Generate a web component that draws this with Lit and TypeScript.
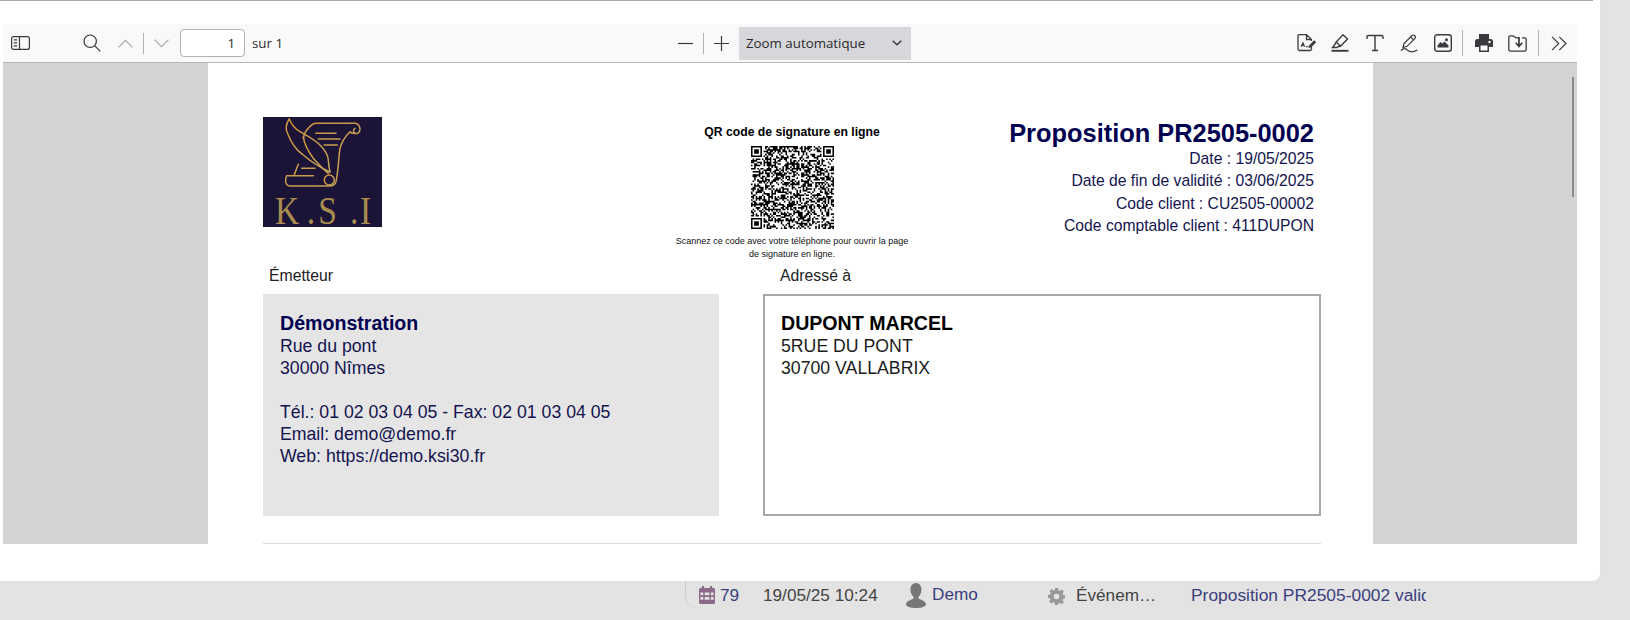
import { LitElement, html, css } from "lit";
import { customElement } from "lit/decorators.js";

function buildQr(): string {
  const n = 53;
  let s = 20250519;
  const rnd = () => {
    s = (s * 1664525 + 1013904223) >>> 0;
    return (s >>> 16) / 65536;
  };
  const finder = (x: number, y: number, ox: number, oy: number) => {
    const dx = x - ox, dy = y - oy;
    if (dx < -1 || dy < -1 || dx > 7 || dy > 7) return -1;
    if (dx < 0 || dy < 0 || dx > 6 || dy > 6) return 0;
    if (dx === 0 || dy === 0 || dx === 6 || dy === 6) return 1;
    if (dx >= 2 && dx <= 4 && dy >= 2 && dy <= 4) return 1;
    return 0;
  };
  let d = "";
  for (let y = 0; y < n; y++) {
    for (let x = 0; x < n; x++) {
      let v = -1;
      for (const [ox, oy] of [[0, 0], [n - 7, 0], [0, n - 7]]) {
        const f = finder(x, y, ox, oy);
        if (f >= 0) v = f;
      }
      const on = v >= 0 ? v === 1 : rnd() > 0.5;
      if (on) d += `M${x} ${y}h1v1h-1z`;
    }
  }
  return d;
}
const QR_PATH = buildQr();

@customElement("app-root")
export class AppRoot extends LitElement {
  static styles = css`
    :host { display: block; width: 1630px; height: 620px; overflow: hidden; background: #e3e3e3; font-family: "Liberation Sans", Arial, sans-serif; }
    .dialog { width: 1600px; height: 581px; background: #fff; border-bottom-right-radius: 8px; display: flex; flex-direction: column; box-sizing: border-box; padding-left: 3px; box-shadow: 0 0 1px #ddd; }
    .topline { width: 1593px; height: 1px; background: #a6a6a6; margin: 0 0 23px -3px; flex: none; }
    .viewer { width: 1574px; height: 520px; display: flex; flex-direction: column; position: relative; overflow: hidden; flex: none; }
    .toolbar { height: 39px; box-sizing: border-box; background: #f9f9fa; border-bottom: 1px solid #b8b8b8; display: flex; align-items: center; font-family: "Open Sans", "Noto Sans", sans-serif; font-size: 13.3px; color: #2b2b2b; flex: none; }
    .toolbar svg { display: block; flex: none; fill: none; stroke: #3a3a3f; stroke-width: 1.2; }
    .sep { width: 1px; height: 21px; background: #b4b4b8; flex: none; }
    .pageinput { width: 65px; height: 28px; box-sizing: border-box; border: 1px solid #b1b1b7; border-radius: 4px; background: #fff; text-align: right; padding-right: 9px; line-height: 27px; flex: none; }
    .zoomsel { width: 172px; height: 33px; background: #d7d7db; display: flex; align-items: center; justify-content: space-between; padding: 0 9px 0 7px; box-sizing: border-box; flex: none; }
    .canvas { flex: 1; background: #d3d3d6; display: flex; padding-left: 205px; overflow: hidden; }
    .page { width: 1165px; height: 600px; background: #fff; box-sizing: border-box; padding: 54px 52px 0 55px; flex: none; color: #000050; }
    .head { display: flex; align-items: flex-start; height: 150px; }
    .logo { width: 119px; height: 110px; display: block; flex: none; background: #1c1437; }
    .qr { width: 240px; margin-left: 290px; flex: none; text-align: center; color: #000; }
    .qr-title { font-size: 12.2px; font-weight: 700; line-height: 14px; margin-top: 8px; }
    .qr-img { display: block; width: 83px; height: 83px; margin: 7px auto 6px; }
    .qr-note { font-size: 9px; line-height: 13px; color: #111; }
    .info { flex: 1; text-align: right; padding-right: 7px; font-size: 15.7px; line-height: 22.4px; color: #14144e; }
    .title { font-size: 25.4px; font-weight: 700; line-height: 28px; color: #000050; margin-top: 2px; margin-bottom: 1px; }
    .parties { display: grid; grid-template-columns: 456px 558px; column-gap: 44px; }
    .label { font-size: 15.8px; line-height: 18px; color: #222; margin-left: 6px; }
    .addr .label { margin-left: 17px; }
    .box { height: 222px; box-sizing: border-box; margin-top: 9px; padding: 18px 17px; font-size: 17.7px; line-height: 22px; }
    .sender { background: #e5e5e6; color: #14144e; }
    .sender b { color: #000050; font-size: 19.6px; }
    .recipient { border: 2px solid #a8a8a8; color: #1c1c1c; padding: 16px 16px; }
    .recipient b { color: #000; font-size: 19.6px; }
    .blank { height: 22px; }
    .rule { height: 1px; background: #dcdcdc; margin-top: 27px; }
    .scrollthumb { position: absolute; left: 1569px; top: 53px; width: 2px; height: 120px; background: #8b8b8e; }
    .status { flex: 1; display: flex; }
    .spacer { width: 685px; flex: none; }
    .bar { flex: 1; border-left: 1.5px solid #cbcbcb; border-bottom-left-radius: 12px; margin-bottom: -1px; display: flex; align-items: flex-start; font-size: 17.2px; line-height: 18px; color: #444; padding-top: 4px; box-sizing: border-box; }
    .bar svg { display: block; flex: none; }
    .link { color: #3a3f7c; }
    .cell { flex: none; white-space: nowrap; overflow: hidden; }
    .subject { font-size: 17.4px; }
  `;

  render() {
    return html`
      <div class="dialog">
        <div class="topline"></div>
        <div class="viewer">
          ${this.toolbar()}
          <div class="canvas">
            <div class="page">
              <div class="head">
                ${this.logo()}
                <div class="qr">
                  <div class="qr-title">QR code de signature en ligne</div>
                  <svg class="qr-img" viewBox="0 0 53 53" aria-hidden="true"><path d=${QR_PATH} fill="#000"></path></svg>
                  <div class="qr-note">Scannez ce code avec votre téléphone pour ouvrir la page<br />de signature en ligne.</div>
                </div>
                <div class="info">
                  <div class="title">Proposition PR2505-0002</div>
                  <div>Date : 19/05/2025</div>
                  <div>Date de fin de validité : 03/06/2025</div>
                  <div>Code client : CU2505-00002</div>
                  <div>Code comptable client : 411DUPON</div>
                </div>
              </div>
              <div class="parties">
                <div>
                  <div class="label">Émetteur</div>
                  <div class="box sender">
                    <b>Démonstration</b><br />Rue du pont<br />30000 Nîmes
                    <div class="blank"></div>
                    Tél.: 01 02 03 04 05 - Fax: 02 01 03 04 05<br />Email: demo@demo.fr<br />Web: https://demo.ksi30.fr
                  </div>
                </div>
                <div class="addr">
                  <div class="label">Adressé à</div>
                  <div class="box recipient">
                    <b>DUPONT MARCEL</b><br />5RUE DU PONT<br />30700 VALLABRIX
                  </div>
                </div>
              </div>
              <div class="rule"></div>
            </div>
          </div>
          <div class="scrollthumb"></div>
        </div>
      </div>
      <div class="status">
        <div class="spacer"></div>
        <div class="bar">
          <svg style="margin:1px 0 0 13px" width="16" height="18" viewBox="0 0 17 18" preserveAspectRatio="none"><path fill="#8b6a88" fill-rule="evenodd" d="M3 0h2.400v2h6.200V0H14v2h1.500A1.500 1.500 0 0 1 17 3.500V16.500a1.500 1.500 0 0 1-1.500 1.500h-14A1.500 1.500 0 0 1 0 16.500V3.500A1.500 1.500 0 0 1 1.500 2H3zM1.500 6.500v2.800h3v-2.800zM6 6.500v2.800h5v-2.800zM12.500 6.500v2.800h3v-2.800zM1.500 11v2.800h3V11zM6 11v2.800h5V11zM12.500 11v2.800h3V11z"/></svg>
          <span class="cell link" style="width:43px;margin-left:5px;margin-top:1px">79</span>
          <span class="cell" style="width:143px;margin-top:1px">19/05/25 10:24</span>
          <svg width="20" height="25" style="margin-top:-2px" viewBox="0 0 20 25"><path fill="#777" d="M10 0c3.600 0 5.500 3 5.500 6.500 0 3-1.300 5.800-2.800 7.300-.6.700-.3 1.700.6 2.100 2.700 1 6.700 2.600 6.700 5.100 0 2.600-4.500 4-10 4S0 23.600 0 21c0-2.500 4-4.100 6.700-5.100.9-.4 1.200-1.400.6-2.100C5.800 12.300 4.500 9.500 4.500 6.500 4.500 3 6.400 0 10 0z"/></svg>
          <span class="cell link" style="width:116px;margin-left:6px">Demo</span>
          <svg width="17" height="17" style="margin-top:3px" viewBox="0 0 17 17"><path fill="#999" fill-rule="evenodd" d="M7 0h3l.4 2.200 1.500.6 1.900-1.300 2.100 2.100-1.300 1.900.6 1.500 2.200.4v3l-2.200.4-.6 1.500 1.300 1.900-2.100 2.100-1.900-1.300-1.500.6L10 17H7l-.4-2.200-1.500-.6-1.900 1.300-2.100-2.100 1.300-1.900-.6-1.500L0 10V7l2.200-.4.600-1.500-1.300-1.900 2.100-2.100 1.900 1.300 1.500-.6zM8.500 5.700a2.800 2.800 0 1 0 0 5.600 2.800 2.800 0 0 0 0-5.600z"/></svg>
          <span class="cell" style="width:115px;margin-left:11px;margin-top:1px">Événem…</span>
          <span class="cell link subject" style="width:235px;margin-top:1px">Proposition PR2505-0002 validée</span>
        </div>
      </div>
    `;
  }

  private logo() {
    return html`<svg class="logo" viewBox="0 0 119 110" aria-label="K.S.I">
      <defs><linearGradient id="g" x1="0" y1="0" x2="1" y2="1"><stop offset="0" stop-color="#d0923e"></stop><stop offset="1" stop-color="#c4a55c"></stop></linearGradient></defs>
      <g fill="none" stroke="url(#g)" stroke-width="1.500" stroke-linecap="round" stroke-linejoin="round">
        <path d="M26.300 2C22 8 23 14 25.300 18c3 8 8 15 15 20 8 7 18 13 26.700 17"></path>
        <path d="M26.300 2c2 5 6 10 10.700 12.700 7 4 15 8 20 13.300 5 5 8 10 8.300 15 .3 4 .7 8 1.700 12"></path>
        <path d="M40.300 19.700c1 8 5 15 10 21.600 5 6 10 11 15 15"></path>
        <path d="M40.300 21.300c1-5 2.500-8 5-10 2.500-3.300 5-5 8.400-5H92c3 0 5 3 5 6 0 3-3 5-5 4-2-.5-2-4 0-5"></path>
        <path d="M92 16.500c-2 0-4 0-5-1.800-5 5-8.500 10-10 16.600-1.500 9-1.500 22-4 33.400-1 3-3 4.300-6 4.300H27c-3 0-5-3-4.300-6 .2-2 .5-4.300 1-4.300h26.600"></path>
        <circle cx="66.300" cy="63" r="5"></circle>
        <path d="M52.700 16.300H73M55.300 22H77M61 28h13.300M35.300 47.300 31 58.500M38.700 51.300H52"></path>
      </g>
      <text transform="translate(0 107) scale(.86 1)" x="14 50.800 64.300 101.200 112.800" y="0" font-family="Liberation Serif, serif" font-size="39" fill="#a98d4f">K.S.I</text>
    </svg>`;
  }

  private toolbar() {
    return html`<div class="toolbar">
      <svg style="margin-left:8px" width="19" height="14" viewBox="0 0 19 14"><rect x=".6" y=".6" width="17.800" height="12.800" rx="2"></rect><path d="M8.500 .6v12.800M2.800 3.800h3.200M2.800 6.800h3.200M2.800 9.800h3.200"></path></svg>
      <svg style="margin-left:53px" width="18" height="18" viewBox="0 0 18 18"><circle cx="7.200" cy="7.200" r="6.200"></circle><path d="m11.800 11.800 5.500 5.500"></path></svg>
      <svg style="margin-left:17px" width="15" height="9" viewBox="0 0 15 9"><path d="m.5 8.300 7-7 7 7" style="stroke:#a8a8ac"></path></svg>
      <div class="sep" style="margin-left:10px"></div>
      <svg style="margin-left:10px" width="15" height="9" viewBox="0 0 15 9"><path d="m.5.700 7 7 7-7" style="stroke:#a8a8ac"></path></svg>
      <div class="pageinput" style="margin-left:11px">1</div>
      <span style="margin-left:7px;width:426px;flex:none">sur 1</span>
      <svg width="15" height="3" viewBox="0 0 15 3"><path d="M0 1.500h15"></path></svg>
      <div class="sep" style="margin-left:10px"></div>
      <svg style="margin-left:10px" width="15" height="15" viewBox="0 0 15 15"><path d="M0 7.500h15M7.500 0v15"></path></svg>
      <div class="zoomsel" style="margin-left:10px"><span>Zoom automatique</span><svg width="10" height="6" viewBox="0 0 10 6"><path d="m.7.700 4.300 4 4.300-4" style="stroke-width:1.500"></path></svg></div>
      <svg style="margin-left:386px" width="20" height="18" viewBox="0 0 20 18"><path d="M6 16.500H2.500a1.500 1.500 0 0 1-1.500-1.500V2A1.500 1.500 0 0 1 2.500.6h7L14.500 5.500V7M9.500.6V5.500h5M14.500 13v2a1.500 1.500 0 0 1-1.500 1.500H6" style="stroke-width:1.300"></path><path d="M4 12.800 6 9l1.500 3.800M4.800 11.500h2M9 13c1-.7 1.500-.7 2 0"></path><path style="fill:#3a3a3f;stroke:none" d="M12 11.500 17.200 6.300l2 2-5.200 5.200-2.500.5z"></path></svg>
      <svg style="margin-left:14px" width="18" height="18" viewBox="0 0 18 18"><path d="M.5 16.800h17" style="stroke-width:1.900"></path><path d="M12 .8 16.500 5 9.500 12.300 5.200 8z" style="stroke-width:1.400"></path><path d="M5.200 8 3.500 11 1.500 13.500H6L7.500 12.500 9.500 12.300" style="stroke-width:1.400"></path></svg>
      <svg style="margin-left:17px" width="18" height="18" viewBox="0 0 18 18"><path d="M1 5V2.800Q1 1.500 2.500 1.500H15.500Q17 1.500 17 2.800V5M9 1.500V16.500M6 16.500H12" style="stroke-width:1.400"></path></svg>
      <svg style="margin-left:16px" width="18" height="19" viewBox="0 0 18 19"><path d="M3 13.500 4 9.500 12 1.500Q13.300.5 14.500 1.500 16 3 15 4.300L7 12.300z"></path><path d="M10.700 3 13.500 5.800"></path><path d="M.8 16.500c3-2.500 5-2.500 7 0 2.500 2 5 2 9.500-.5"></path></svg>
      <svg style="margin-left:16px" width="18" height="18" viewBox="0 0 18 18"><rect x=".7" y=".7" width="16.600" height="16.600" rx="2.500" style="stroke-width:1.400"></rect><path style="fill:#3a3a3f;stroke:none" d="M3.500 13.500V11.500L6.500 8 8.500 9.500 10.500 7.500 14.500 11.500V13.500zM12.500 4.300a1.500 1.500 0 1 0 0 3 1.500 1.500 0 0 0 0-3z"></path></svg>
      <div class="sep" style="margin-left:10px;height:26px"></div>
      <svg style="margin-left:12px" width="18" height="18" viewBox="0 0 18 18"><path style="fill:#3a3a3f;stroke:none" fill-rule="evenodd" d="M4 0h10v5h1.500A2.500 2.500 0 0 1 18 7.500V13h-4v5H4v-5H0V7.500A2.500 2.500 0 0 1 2.500 5H4zM5.500 11.500v5h7v-5zM14.500 6.800a1.200 1.200 0 1 0 0 2.400 1.200 1.200 0 0 0 0-2.400z"></path></svg>
      <svg style="margin-left:15px" width="19" height="17" viewBox="0 0 19 17"><path d="M5 .8H2.500A1.700 1.700 0 0 0 .8 2.500V14.500A1.700 1.700 0 0 0 2.500 16.200H16.500A1.700 1.700 0 0 0 18.200 14.500V4.500A1.700 1.700 0 0 0 16.500 2.800H14M5 .8 8 2.800H11" style="stroke-width:1.300"></path><path d="M11 2v8.500M7.800 7.800 11 11.500l3.200-3.700" style="stroke-width:1.700"></path></svg>
      <div class="sep" style="margin-left:11px;height:26px"></div>
      <svg style="margin-left:12px" width="16" height="15" viewBox="0 0 16 15"><path d="m1 .8 6.700 6.700L1 14.200M8.300 .8 15 7.500l-6.700 6.700"></path></svg>
    </div>`;
  }
}
